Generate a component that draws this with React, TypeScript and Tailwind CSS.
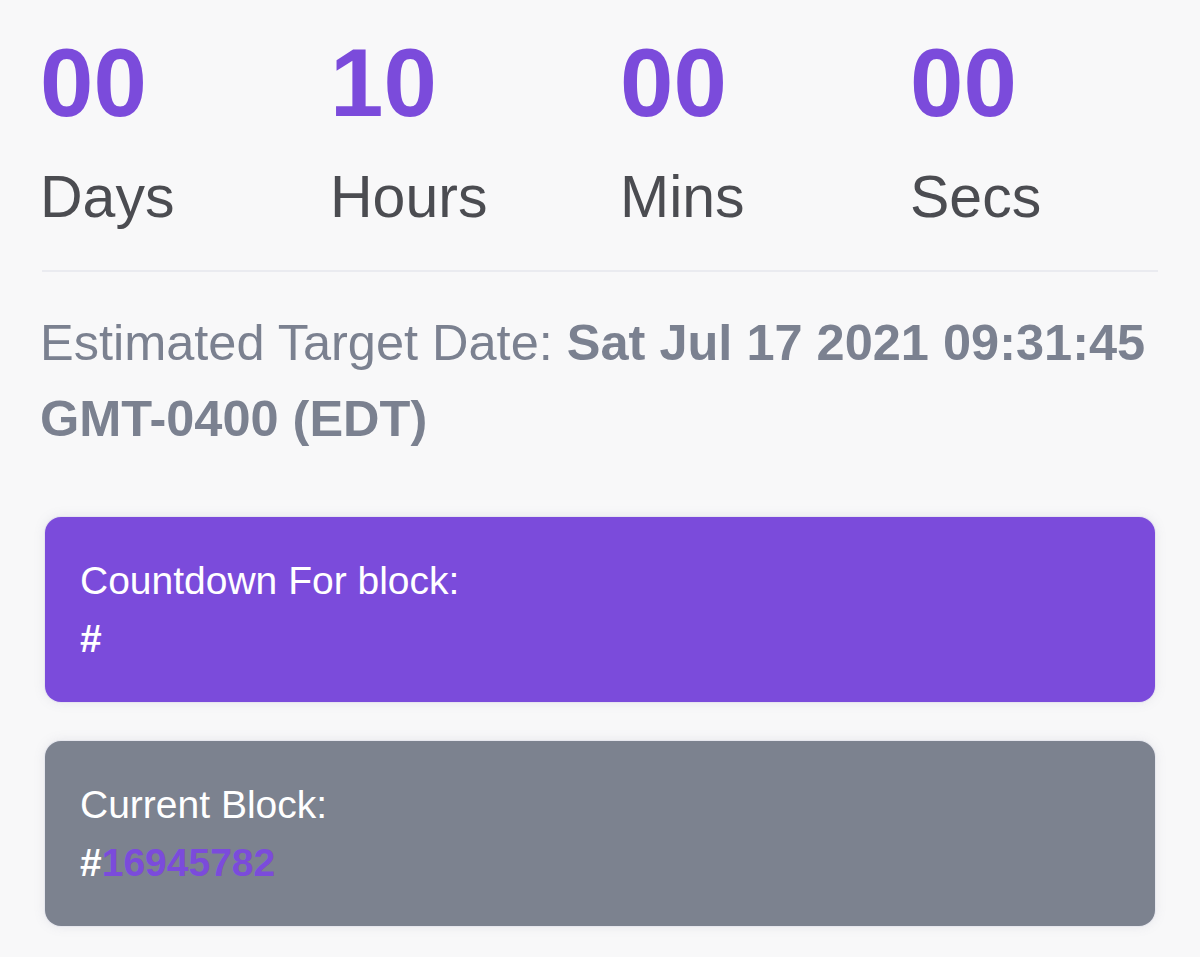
import React from 'react';

interface Unit {
  value: string;
  label: string;
}

const units: Unit[] = [
  { value: '00', label: 'Days' },
  { value: '10', label: 'Hours' },
  { value: '00', label: 'Mins' },
  { value: '00', label: 'Secs' },
];

const font = { fontFamily: '"Liberation Sans", Arial, Helvetica, sans-serif' };

export default function App() {
  return (
    <div className="min-h-[957px] w-full bg-[#f8f8f9]" style={font}>
      <div className="px-[40px] pt-[35px]">
        {/* countdown units */}
        <div className="flex">
          {units.map((u) => (
            <div key={u.label} className="w-[290px] shrink-0 flex flex-col">
              <span className="text-[96px] leading-[96px] font-bold text-[#7b4bdb]">{u.value}</span>
              <span className="mt-[22px] text-[59px] leading-[88px] text-[#4b4c51]">{u.label}</span>
            </div>
          ))}
        </div>

        <div className="mt-[29px] mx-[2px] h-[2px] bg-[#eaebf0]" />

        <p className="mt-[33px] text-[50.5px] leading-[76px] text-[#7b8190]">
          Estimated Target Date: <span className="font-bold">Sat Jul 17 2021 09:31:45 GMT-0400 (EDT)</span>
        </p>

        <div className="mt-[60px] mx-[5px] flex flex-col gap-[39px]">
          <div className="rounded-[16px] bg-[#7b4bdb] px-[35px] pt-[35px] pb-[34px] text-[39px] leading-[58px] text-white shadow-[0_0_12px_rgba(120,120,150,0.15)] ring-1 ring-[#e6e4f0]">
            <div>Countdown For block:</div>
            <div className="font-bold">#</div>
          </div>
          <div className="rounded-[16px] bg-[#7c828f] px-[35px] pt-[35px] pb-[34px] text-[39px] leading-[58px] text-white shadow-[0_0_12px_rgba(120,120,150,0.15)] ring-1 ring-[#e6e7ee]">
            <div>Current Block:</div>
            <div className="font-bold">
              #<span className="text-[#7b4bdb]">16945782</span>
            </div>
          </div>
        </div>
      </div>
    </div>
  );
}
